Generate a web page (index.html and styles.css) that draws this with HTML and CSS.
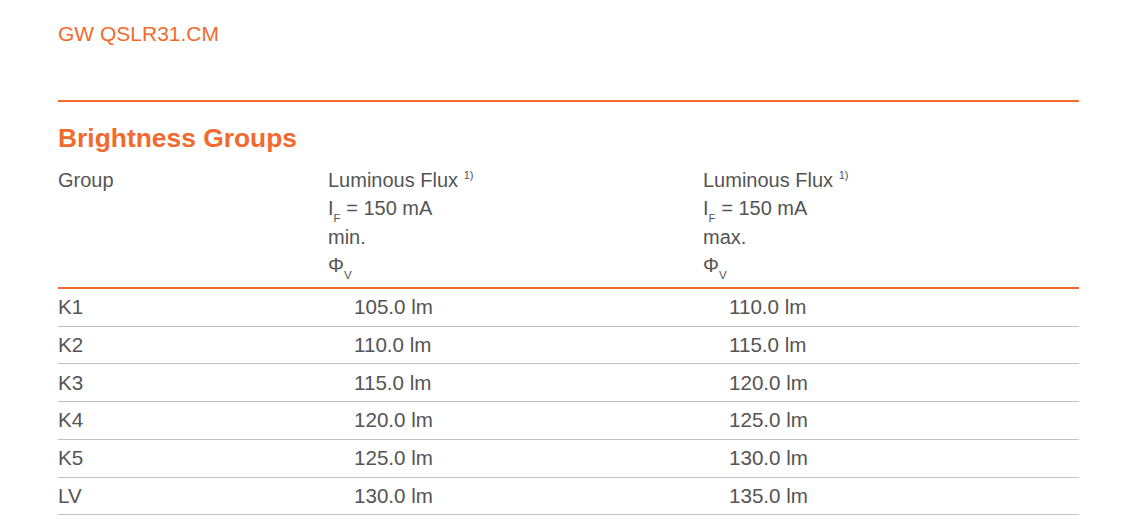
FILE: index.html
```html
<!DOCTYPE html>
<html>
<head>
<meta charset="utf-8">
<link rel="stylesheet" href="styles.css">
</head>
<body>
<div class="page">
  <div class="doc-title">GW QSLR31.CM</div>
  <div class="rule"></div>
  <h2 class="section-title">Brightness Groups</h2>
  <div class="grid">
    <div class="head-row">
      <div class="cell">Group</div>
      <div class="cell">
        <div>Luminous Flux <sup class="note">1)</sup></div>
        <div>I<sub class="sub">F</sub> = 150 mA</div>
        <div>min.</div>
        <div>Φ<sub class="sub">V</sub></div>
      </div>
      <div class="cell">
        <div>Luminous Flux <sup class="note">1)</sup></div>
        <div>I<sub class="sub">F</sub> = 150 mA</div>
        <div>max.</div>
        <div>Φ<sub class="sub">V</sub></div>
      </div>
    </div>
    <div class="row"><div class="cell">K1</div><div class="cell val">105.0 lm</div><div class="cell val">110.0 lm</div></div>
    <div class="row"><div class="cell">K2</div><div class="cell val">110.0 lm</div><div class="cell val">115.0 lm</div></div>
    <div class="row"><div class="cell">K3</div><div class="cell val">115.0 lm</div><div class="cell val">120.0 lm</div></div>
    <div class="row"><div class="cell">K4</div><div class="cell val">120.0 lm</div><div class="cell val">125.0 lm</div></div>
    <div class="row"><div class="cell">K5</div><div class="cell val">125.0 lm</div><div class="cell val">130.0 lm</div></div>
    <div class="row"><div class="cell">LV</div><div class="cell val">130.0 lm</div><div class="cell val">135.0 lm</div></div>
  </div>
</div>
</body>
</html>
```

FILE: styles.css
```css
html, body {
  margin: 0;
  padding: 0;
  background: #ffffff;
}

.page {
  width: 1021px;
  margin-left: 58px;
  padding-top: 22px;
  font-family: "Liberation Sans", Arial, sans-serif;
  color: #555555;
}

.doc-title {
  font-size: 21px;
  line-height: 24px;
  color: #f26a2e;
}

.rule {
  margin-top: 54px;
  height: 2px;
  background: #f26a2e;
}

.section-title {
  margin: 21px 0 0 0;
  font-size: 26.4px;
  line-height: 30px;
  font-weight: bold;
  color: #f26a2e;
}

.grid {
  display: flex;
  flex-direction: column;
}

.head-row,
.row {
  display: grid;
  grid-template-columns: 270px 375px 1fr;
}

.head-row {
  padding-top: 12.75px;
  padding-bottom: 7px;
  border-bottom: 2px solid #f26a2e;
  font-size: 20px;
  line-height: 28.5px;
}

.row {
  height: 36.75px;
  align-items: center;
  border-bottom: 1px solid #c2c2c2;
  font-size: 20.6px;
  line-height: 24px;
}

.val {
  padding-left: 26px;
}

.note {
  font-size: 11px;
  line-height: 0;
  vertical-align: 8px;
}

.sub {
  font-size: 11.5px;
  line-height: 0;
  vertical-align: -7px;
}
```
